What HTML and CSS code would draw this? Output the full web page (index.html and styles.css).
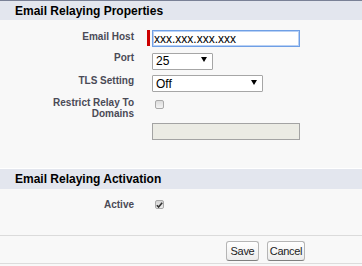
FILE: index.html
```html
<!DOCTYPE html>
<html lang="en">
<head>
  <meta charset="UTF-8">
  <meta name="viewport" content="width=device-width, initial-scale=1.0">
  <title>Email Relaying</title>
  <link rel="stylesheet" href="styles.css">
</head>
<body>

  <div class="page-block">

    <!-- Properties -->
    <h3 class="sub-header first">Email Relaying Properties</h3>
    <div class="section props">
      <div class="row">
        <label class="label" for="host">Email Host</label>
        <div class="data req">
          <span class="required"></span>
          <input id="host" class="text focused" type="text" value="xxx.xxx.xxx.xxx">
        </div>
      </div>
      <div class="row">
        <label class="label" for="port">Port</label>
        <div class="data">
          <span class="select-wrap">
            <select id="port" class="select port"><option>25</option></select>
          </span>
        </div>
      </div>
      <div class="row">
        <label class="label" for="tls">TLS Setting</label>
        <div class="data">
          <span class="select-wrap">
            <select id="tls" class="select tls"><option>Off</option></select>
          </span>
        </div>
      </div>
      <div class="row">
        <label class="label">Restrict Relay To Domains</label>
        <div class="data">
          <span class="check"></span>
        </div>
      </div>
      <div class="row">
        <span class="label"></span>
        <div class="data">
          <input class="text" type="text" disabled>
        </div>
      </div>
    </div>

    <!-- Activation -->
    <h3 class="sub-header">Email Relaying Activation</h3>
    <div class="section activation">
      <div class="row">
        <label class="label">Active</label>
        <div class="data">
          <span class="check checked">
            <svg width="7" height="6" viewBox="0 0 7 6"><path d="M0.8 3.2 L2.6 5 L6.2 0.8" fill="none" stroke="#333" stroke-width="1.6"/></svg>
          </span>
        </div>
      </div>
    </div>

    <div class="buttons">
      <input class="btn save" type="button" value="Save">
      <input class="btn cancel" type="button" value="Cancel">
    </div>

  </div>

</body>
</html>
```

FILE: styles.css
```css
* { box-sizing: border-box; margin: 0; padding: 0; }

body {
  font-family: Arial, "Liberation Sans", sans-serif;
  background: #f8f8f8;
  color: #000;
}

.page-block {
  border-top: 1px solid #7a8196;
  border-bottom: 1px solid #dcdcdc;
  height: 264px;
}

/* — SECTION HEADERS ————————————— */
.sub-header {
  background: #e3e6ee;
  border-top: 1px solid #fff;
  font-size: 12px;
  font-weight: bold;
  line-height: 14px;
  color: #000;
  padding: 3px 15px 3px;
}
.sub-header.first { border-top: none; padding: 3px 15px 2px; }

/* — ROWS ————————————— */
.section.props { padding: 8px 0 26px; }
.section.activation { padding: 7px 0 0; height: 47px; border-bottom: 1px solid #dbdbdb; }

.row { display: flex; padding: 2px 0; }

.label {
  width: 120px;
  margin: 0 13px 0 14px;
  padding-top: 1px;
  text-align: right;
  font-size: 10px;
  line-height: 11px;
  font-weight: bold;
  color: #4a4a56;
}

.data { display: flex; padding-left: 5px; }
.data.req { padding-left: 0; }

.required {
  width: 3px;
  height: 16px;
  margin-right: 2px;
  background: #c00;
}

/* — FIELDS ————————————— */
.text {
  width: 148px;
  height: 17px;
  padding: 0 1px;
  border: 1px solid #a5a5a5;
  font-family: inherit;
  font-size: 12px;
  color: #000;
  background: #fff;
  outline: none;
}
.text.focused {
  border-color: #6f9fe5;
  box-shadow: inset 0 0 0 1px #b9d1f5;
}
.text:disabled { background: #ebebe4; border-color: #a3a3a3; }

.select-wrap { position: relative; display: block; }
.select-wrap::after {
  content: "";
  position: absolute;
  right: 6px;
  top: 6px;
  border-left: 3px solid transparent;
  border-right: 3px solid transparent;
  border-top: 5px solid #000;
}
.select {
  appearance: none;
  -webkit-appearance: none;
  height: 17px;
  padding: 0 3px;
  border: 1px solid #a6a6a6;
  border-radius: 1px;
  background: #fff;
  font-family: inherit;
  font-size: 12px;
  color: #000;
}
.select.port { width: 61px; }
.select.tls { width: 111px; }

.check {
  display: flex;
  align-items: center;
  justify-content: center;
  width: 9px;
  height: 9px;
  margin: 4px 0 0 3px;
  border: 1px solid #a9a9a9;
  border-radius: 2px;
  background: linear-gradient(#dcdcdc, #f4f4f4);
}
.check.checked { margin-top: 2px; background: linear-gradient(#d4d4d4, #ededed); }

/* — BUTTONS ————————————— */
.buttons {
  display: flex;
  justify-content: flex-end;
  gap: 8px;
  padding: 5px 57px 0 0;
}
.btn {
  height: 20px;
  padding: 0;
  border: 1px solid #b5b5b5;
  border-bottom-color: #7f7f7f;
  border-radius: 3px;
  background: linear-gradient(#ffffff, #ececec);
  font-family: inherit;
  font-size: 11px;
  letter-spacing: -0.3px;
  color: #222;
}
.btn.save { width: 33px; }
.btn.cancel { width: 38px; }
```
